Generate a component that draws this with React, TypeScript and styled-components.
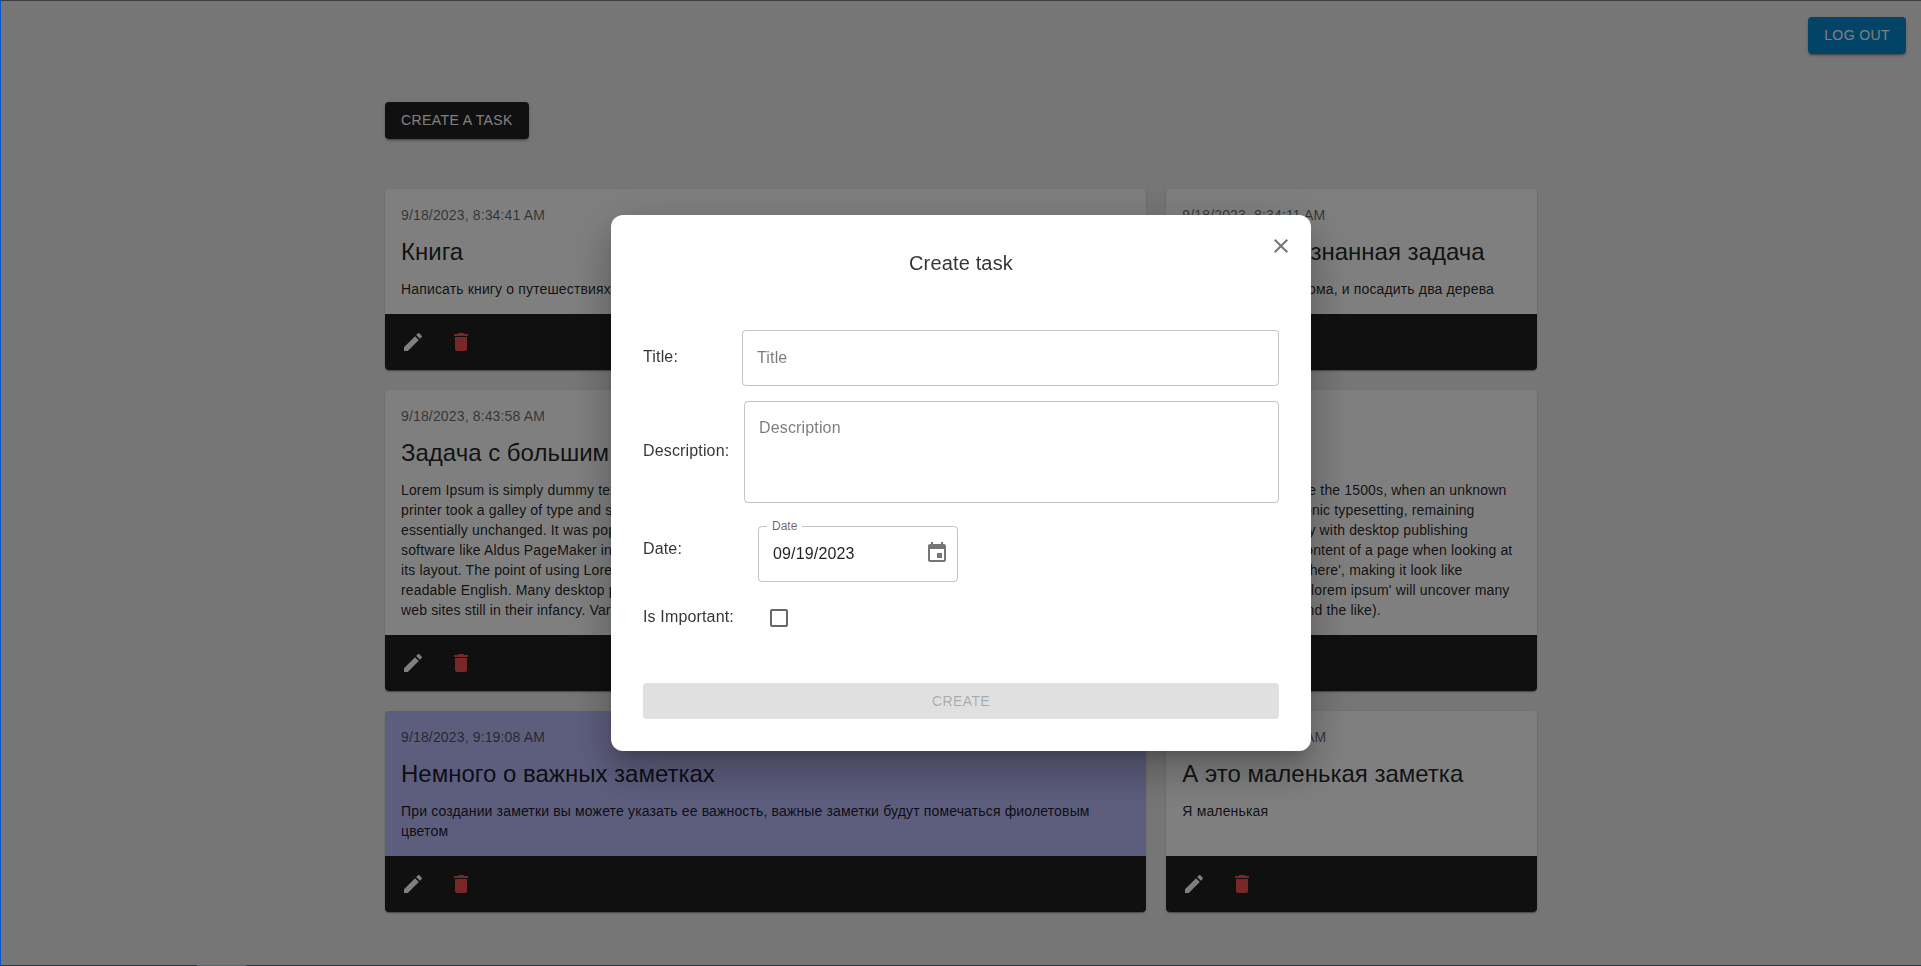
import React from 'react';
import styled, { createGlobalStyle } from 'styled-components';

const GlobalStyle = createGlobalStyle`
  html, body {
    margin: 0;
    padding: 0;
    height: 100%;
    overflow: hidden;
  }

  body {
    background: #ededed;
    font-family: 'Liberation Sans', Arial, sans-serif;
    color: rgba(0, 0, 0, 0.87);
  }

  #root {
    height: 100%;
  }

  * {
    box-sizing: border-box;
  }
`;

const Page = styled.div`
  height: 966px;
  display: flex;
  flex-direction: column;
`;

const TopBar = styled.header`
  display: flex;
  justify-content: flex-end;
  padding: 17px 15px 0 0;
`;

const Button = styled.button<{ $color: string }>`
  height: 37px;
  padding: 0 16px 2px;
  border: none;
  border-radius: 4px;
  background: ${(props) => props.$color};
  color: #fff;
  font-family: inherit;
  font-size: 14px;
  letter-spacing: 0.4px;
  text-transform: uppercase;
  box-shadow: 0 3px 1px -2px rgba(0, 0, 0, 0.2), 0 2px 2px 0 rgba(0, 0, 0, 0.14), 0 1px 5px 0 rgba(0, 0, 0, 0.12);
`;

const Container = styled.main`
  width: 1152px;
  margin: 48px 0 0 385px;
`;

const Grid = styled.section`
  margin-top: 50px;
  display: grid;
  grid-template-columns: repeat(12, 1fr);
  gap: 20px;
`;

const Card = styled.article<{ $span: number; $important?: boolean; $height: number }>`
  grid-column: span ${(props) => props.$span};
  height: ${(props) => props.$height}px;
  display: flex;
  flex-direction: column;
  border-radius: 4px;
  overflow: hidden;
  background: ${(props) => (props.$important ? '#babafa' : '#fff')};
  box-shadow: 0 2px 1px -1px rgba(0, 0, 0, 0.2), 0 1px 1px 0 rgba(0, 0, 0, 0.14), 0 1px 3px 0 rgba(0, 0, 0, 0.12);
`;

const CardBody = styled.div`
  flex: 1;
  padding: 16px 16px 0;
`;

const CardDate = styled.div`
  font-size: 14px;
  line-height: 20px;
  letter-spacing: 0.15px;
  color: rgba(0, 0, 0, 0.6);
`;

const CardTitle = styled.h2`
  margin: 11px 0;
  font-size: 24px;
  line-height: 32px;
  font-weight: 400;
`;

const CardText = styled.p`
  margin: 0;
  font-size: 14px;
  line-height: 20px;
  letter-spacing: 0.15px;
`;

const CardActions = styled.div`
  height: 56px;
  flex: none;
  padding: 8px;
  display: flex;
  gap: 8px;
  background: #212121;
`;

const IconButton = styled.button<{ $color: string }>`
  width: 40px;
  height: 40px;
  padding: 8px;
  border: none;
  background: none;
  color: ${(props) => props.$color};
  display: flex;
`;

const Overlay = styled.div`
  position: fixed;
  inset: 0;
  display: flex;
  align-items: center;
  justify-content: center;
  background: rgba(0, 0, 0, 0.5);
  border-top: 1px solid #3d3d3d;
  border-bottom: 1px solid #2a3a44;
  border-left: 1px solid #0a55d0;
`;

const BottomSliver = styled.span`
  position: absolute;
  left: 196px;
  bottom: -1px;
  width: 49px;
  height: 1px;
  background: #56646c;
`;

const Modal = styled.div`
  position: relative;
  width: 700px;
  height: 536px;
  padding: 32px;
  border-radius: 12px;
  background: #fff;
  box-shadow: 0 11px 15px -7px rgba(0, 0, 0, 0.2), 0 24px 38px 3px rgba(0, 0, 0, 0.14), 0 9px 46px 8px rgba(0, 0, 0, 0.12);
  display: flex;
  flex-direction: column;
`;

const CloseButton = styled.button`
  position: absolute;
  top: 19px;
  right: 18px;
  width: 24px;
  height: 24px;
  padding: 0;
  border: none;
  background: none;
  color: rgba(0, 0, 0, 0.54);
`;

const ModalTitle = styled.h2`
  margin: 0 0 51px;
  font-size: 20px;
  line-height: 32px;
  font-weight: 400;
  letter-spacing: 0.15px;
  text-align: center;
  color: rgba(0, 0, 0, 0.8);
`;

const Form = styled.form`
  display: flex;
  flex-direction: column;
  gap: 15px;
  flex: 1;
`;

const Row = styled.div`
  display: flex;
  align-items: center;
`;

const Label = styled.label<{ $width: number }>`
  flex: none;
  width: ${(props) => props.$width}px;
  padding-bottom: 2px;
  font-size: 16px;
  line-height: 24px;
  letter-spacing: 0.15px;
  color: rgba(0, 0, 0, 0.8);
`;

const fieldStyles = `
  width: 100%;
  border: 1px solid rgba(0, 0, 0, 0.23);
  border-radius: 4px;
  padding: 15px 14px;
  font-family: inherit;
  font-size: 16px;
  line-height: 23px;
  letter-spacing: 0.15px;
  color: rgba(0, 0, 0, 0.87);
  background: transparent;
  outline: none;

  &::placeholder {
    color: rgba(0, 0, 0, 0.52);
    opacity: 1;
  }
`;

const TextInput = styled.input`
  ${fieldStyles}
  height: 56px;
`;

const TextArea = styled.textarea`
  ${fieldStyles}
  height: 102px;
  padding-top: 14px;
  resize: none;
  display: block;
`;

const DateWrap = styled.div`
  padding-top: 8px;
`;

const DateField = styled.div`
  position: relative;
  width: 200px;
  height: 56px;
`;

const DateLabel = styled.span`
  position: absolute;
  top: -7px;
  left: 9px;
  padding: 0 5px;
  background: #fff;
  font-size: 12px;
  line-height: 14px;
  color: rgba(0, 0, 0, 0.6);
`;

const DateIcon = styled.span`
  position: absolute;
  top: 15px;
  right: 9px;
  width: 24px;
  height: 24px;
  color: rgba(0, 0, 0, 0.54);
`;

const CheckBox = styled.span`
  width: 42px;
  height: 42px;
  padding: 9px;
  color: rgba(0, 0, 0, 0.6);
`;

const SubmitButton = styled.button`
  flex: none;
  height: 36px;
  border: none;
  border-radius: 4px;
  background: #e0e0e0;
  color: rgba(0, 0, 0, 0.26);
  font-family: inherit;
  font-size: 14px;
  letter-spacing: 0.4px;
  text-transform: uppercase;
`;

const Icon = ({ d }: { d: string }) => (
  <svg width="24" height="24" viewBox="0 0 24 24" fill="currentColor" style={{ display: 'block' }}>
    <path d={d} />
  </svg>
);

const EDIT = 'M3 17.25V21h3.75L17.81 9.94l-3.75-3.75L3 17.25zM20.71 7.04c.39-.39.39-1.02 0-1.41l-2.34-2.34a.9959.9959 0 0 0-1.41 0l-1.83 1.83 3.75 3.75 1.83-1.83z';
const DELETE = 'M6 19c0 1.1.9 2 2 2h8c1.1 0 2-.9 2-2V7H6v12zM19 4h-3.5l-1-1h-5l-1 1H5v2h14V4z';
const CLOSE = 'M19 6.41 17.59 5 12 10.59 6.41 5 5 6.41 10.59 12 5 17.59 6.41 19 12 13.41 17.59 19 19 17.59 13.41 12z';
const CALENDAR = 'M17 12h-5v5h5v-5zM16 1v2H8V1H6v2H5c-1.11 0-1.99.9-1.99 2L3 19c0 1.1.89 2 2 2h14c1.1 0 2-.9 2-2V5c0-1.1-.9-2-2-2h-1V1h-2zm3 18H5V8h14v11z';
const CHECKBOX = 'M19 5v14H5V5h14m0-2H5c-1.1 0-2 .9-2 2v14c0 1.1.9 2 2 2h14c1.1 0 2-.9 2-2V5c0-1.1-.9-2-2-2z';

const LOREM =
  "Lorem Ipsum is simply dummy text of the printing and typesetting industry. Lorem Ipsum has been the industry's standard dummy text ever since the 1500s, when an unknown printer took a galley of type and scrambled it to make a type specimen book. It has survived not only five centuries, but also the leap into electronic typesetting, remaining essentially unchanged. It was popularised in the 1960s with the release of Letraset sheets containing Lorem Ipsum passages, and more recently with desktop publishing software like Aldus PageMaker including versions of Lorem Ipsum. It is a long established fact that a reader will be distracted by the readable content of a page when looking at its layout. The point of using Lorem Ipsum is that it has a more-or-less normal distribution of letters, as opposed to using 'Content here, content here', making it look like readable English. Many desktop publishing packages and web page editors now use Lorem Ipsum as their default model text, and a search for 'lorem ipsum' will uncover many web sites still in their infancy. Various versions have evolved over the years, sometimes by accident, sometimes on purpose (injected humour and the like).";

const tasks = [
  { date: '9/18/2023, 8:34:41 AM', title: 'Книга', text: 'Написать книгу о путешествиях', span: 8, height: 181 },
  { date: '9/18/2023, 8:34:11 AM', title: 'Первая осознанная задача', text: 'Перестроить два дома, и посадить два дерева', span: 4, height: 181 },
  { date: '9/18/2023, 8:43:58 AM', title: 'Задача с большим описанием', text: LOREM, span: 12, height: 301 },
  {
    date: '9/18/2023, 9:19:08 AM',
    title: 'Немного о важных заметках',
    text: 'При создании заметки вы можете указать ее важность, важные заметки будут помечаться фиолетовым цветом',
    span: 8,
    height: 201,
    important: true,
  },
  { date: '9/18/2023, 9:20:15 AM', title: 'А это маленькая заметка', text: 'Я маленькая', span: 4, height: 201 },
];

const App = () => {
  return (
    <>
      <GlobalStyle />
      <Page>
        <TopBar>
          <Button $color="#0288d1">Log out</Button>
        </TopBar>
        <Container>
          <Button $color="#212121">Create a task</Button>
          <Grid>
            {tasks.map((task) => (
              <Card key={task.date} $span={task.span} $height={task.height} $important={task.important}>
                <CardBody>
                  <CardDate>{task.date}</CardDate>
                  <CardTitle>{task.title}</CardTitle>
                  <CardText>{task.text}</CardText>
                </CardBody>
                <CardActions>
                  <IconButton $color="#fff"><Icon d={EDIT} /></IconButton>
                  <IconButton $color="#f44f4f"><Icon d={DELETE} /></IconButton>
                </CardActions>
              </Card>
            ))}
          </Grid>
        </Container>
      </Page>
      <Overlay>
        <BottomSliver />
        <Modal>
          <CloseButton><Icon d={CLOSE} /></CloseButton>
          <ModalTitle>Create task</ModalTitle>
          <Form>
            <Row>
              <Label $width={99}>Title:</Label>
              <TextInput placeholder="Title" />
            </Row>
            <Row>
              <Label $width={101}>Description:</Label>
              <TextArea placeholder="Description" />
            </Row>
            <Row>
              <Label $width={115}>Date:</Label>
              <DateWrap>
                <DateField>
                  <TextInput defaultValue="09/19/2023" />
                  <DateLabel>Date</DateLabel>
                  <DateIcon><Icon d={CALENDAR} /></DateIcon>
                </DateField>
              </DateWrap>
            </Row>
            <Row>
              <Label $width={115}>Is Important:</Label>
              <CheckBox><Icon d={CHECKBOX} /></CheckBox>
            </Row>
          </Form>
          <SubmitButton disabled>Create</SubmitButton>
        </Modal>
      </Overlay>
    </>
  );
};

export default App;
